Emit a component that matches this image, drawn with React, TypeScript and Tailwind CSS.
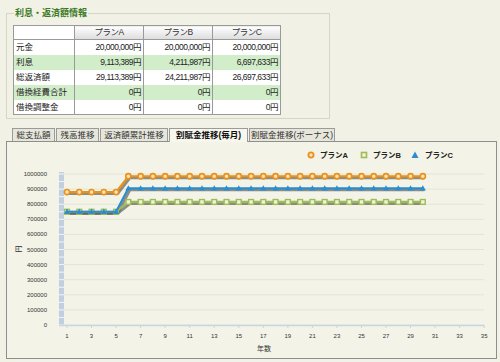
import React from "react";

const rows = [
  { label: "元金", a: "20,000,000円", b: "20,000,000円", c: "20,000,000円", green: false },
  { label: "利息", a: "9,113,389円", b: "4,211,987円", c: "6,697,633円", green: true },
  { label: "総返済額", a: "29,113,389円", b: "24,211,987円", c: "26,697,633円", green: false },
  { label: "借換経費合計", a: "0円", b: "0円", c: "0円", green: true },
  { label: "借換調整金", a: "0円", b: "0円", c: "0円", green: false },
];

const tabs = [
  { label: "総支払額", w: "w-[43px]" },
  { label: "残高推移", w: "w-[43px]" },
  { label: "返済額累計推移", w: "w-[68px]" },
  { label: "割賦金推移(毎月)", w: "w-[79px]", active: true },
  { label: "割賦金推移(ボーナス)", w: "w-[86px]" },
];

// chart geometry, in page coordinates
const xOf = (n: number) => 67 + (n - 1) * 12.27;
const yOf = (v: number) => 325 - (v / 100000) * 15.1;

const makeSeries = (low: number, high: number) =>
  Array.from({ length: 30 }, (_, i) => ({ x: xOf(i + 1), y: yOf(i < 5 ? low : high) }));

const seriesA = makeSeries(880000, 985000);
const seriesB = makeSeries(750000, 815000);
const seriesC = makeSeries(750000, 905000);

const pts = (s: { x: number; y: number }[], d = 0) =>
  s.map((p) => `${p.x + d},${p.y + d}`).join(" ");

const ORANGE = "#e8921c";
const GREEN = "#9dbb56";
const BLUE = "#2b8dcf";

function Chart() {
  const xLabels = Array.from({ length: 18 }, (_, i) => 1 + i * 2);
  const yVals = Array.from({ length: 11 }, (_, i) => i * 100000);
  const bandMarks = Array.from({ length: 21 }, (_, i) => 325 - i * 7.55);

  return (
    <svg width="489" height="216" className="block">
      <g transform="translate(-7,-142)" fontFamily="'Liberation Sans','Noto Sans CJK JP',sans-serif">
        {/* legend */}
        <circle cx="311" cy="155" r="2.6" fill="#fbe3b8" stroke={ORANGE} strokeWidth="1.8" />
        <text x="320" y="158" fontSize="7.5" fontWeight="bold" fill="#222">プランA</text>
        <rect x="361.5" y="152.5" width="5" height="5" fill="#eef3dc" stroke={GREEN} strokeWidth="1.6" />
        <text x="373" y="158" fontSize="7.5" fontWeight="bold" fill="#222">プランB</text>
        <polygon points="415,151.5 418.5,158 411.5,158" fill={BLUE} />
        <text x="425" y="158" fontSize="7.5" fontWeight="bold" fill="#222">プランC</text>

        {/* grid */}
        {yVals.map((v) => (
          <line key={v} x1="64" x2="484" y1={yOf(v)} y2={yOf(v)} stroke="#e4e4d6" strokeWidth="1" />
        ))}

        {/* y axis band */}
        <rect x="59" y="172" width="5" height="153" fill="#c0d0e1" />
        {bandMarks.map((y, i) => (
          <line key={i} x1="59" x2="64" y1={y} y2={y} stroke="#ffffff" strokeWidth="0.8" />
        ))}

        {/* x axis */}
        <line x1="59" x2="484" y1="325.5" y2="325.5" stroke="#c8d5e2" strokeWidth="1.5" />
        {xLabels.map((n) => (
          <line key={n} x1={xOf(n)} x2={xOf(n)} y1="325" y2="328" stroke="#c8d5e2" strokeWidth="1" />
        ))}

        {yVals.map((v) => (
          <text key={v} x="47" y={yOf(v) + 2} fontSize="6" textAnchor="end" fill="#333">
            {v}
          </text>
        ))}
        {xLabels.map((n) => (
          <text key={n} x={xOf(n)} y="338" fontSize="6" textAnchor="middle" fill="#333">
            {n}
          </text>
        ))}
        <text x="264" y="351" fontSize="7" textAnchor="middle" fill="#333">年数</text>
        <text x="0" y="0" fontSize="7" fill="#333" transform="translate(21,249) rotate(-90)" textAnchor="middle">円</text>

        {/* shadows */}
        {[seriesB, seriesC, seriesA].map((s, i) => (
          <polyline key={i} points={pts(s, 1.6)} fill="none" stroke="#4a4a40" strokeOpacity="0.6" strokeWidth="2.8" />
        ))}

        {/* plan B */}
        <polyline points={pts(seriesB)} fill="none" stroke={GREEN} strokeWidth="2.2" />
        {seriesB.map((p, i) => (
          <rect key={i} x={p.x - 2.4} y={p.y - 2.4} width="4.8" height="4.8" fill="#eef3dc" stroke={GREEN} strokeWidth="1.4" />
        ))}

        {/* plan C */}
        <polyline points={pts(seriesC)} fill="none" stroke={BLUE} strokeWidth="2.2" />
        {seriesC.map((p, i) => (
          <polygon key={i} points={`${p.x},${p.y - 3.2} ${p.x + 3},${p.y + 2.2} ${p.x - 3},${p.y + 2.2}`} fill={BLUE} />
        ))}

        {/* plan A */}
        <polyline points={pts(seriesA)} fill="none" stroke={ORANGE} strokeWidth="2.2" />
        {seriesA.map((p, i) => (
          <circle key={i} cx={p.x} cy={p.y} r="2.6" fill="#fbe3b8" stroke={ORANGE} strokeWidth="1.6" />
        ))}
      </g>
    </svg>
  );
}

export default function App() {
  return (
    <div className="w-[500px] h-[362px] overflow-hidden bg-[#f1f1e5] pl-[6px] pt-[8px] font-['Liberation_Sans','Noto_Sans_CJK_JP',sans-serif] text-[#222]">
      {/* 利息・返済額情報 */}
      <fieldset className="w-[324px] h-[111px] border border-[#d6d6c6]">
        <legend className="ml-[7px] px-[1px] text-[9px] leading-[10px] font-bold text-[#3c7a25]">
          利息・返済額情報
        </legend>
        <table className="ml-[6px] mt-[7px] border-collapse border border-[#9a9a9a] text-[8.5px] leading-none">
          <thead>
            <tr className="h-[14px]">
              <th className="w-[61px] bg-white border border-[#9a9a9a]"></th>
              {["プランA", "プランB", "プランC"].map((h, i) => (
                <th
                  key={h}
                  className={`${i === 2 ? "w-[68px]" : "w-[69px]"} border border-[#9a9a9a] bg-gradient-to-b from-white to-[#dcdcdc] font-normal tracking-[-0.5px] text-[#333]`}
                >
                  {h}
                </th>
              ))}
            </tr>
          </thead>
          <tbody>
            {rows.map((r) => (
              <tr key={r.label} className={`h-[15px] ${r.green ? "bg-[#d2edca]" : "bg-white"}`}>
                <td className="pl-[2px] text-left">{r.label}</td>
                {[r.a, r.b, r.c].map((v, i) => (
                  <td key={i} className="pr-[2px] text-right tracking-[-0.5px] border-l border-[#9a9a9a]">
                    {v}
                  </td>
                ))}
              </tr>
            ))}
          </tbody>
        </table>
      </fieldset>

      {/* tabs */}
      <div className="flex items-end gap-[1px] ml-[6px] mt-[9px] h-[13px]">
        {tabs.map((t) => (
          <div
            key={t.label}
            className={`${t.w} flex items-center justify-center border border-b-0 border-[#9a9a9a] text-[8.5px] leading-none whitespace-nowrap ${
              t.active
                ? "h-[14px] -mb-[1px] relative z-10 bg-[#f7f7ee] font-bold text-[#111]"
                : "h-[13px] bg-[#e6e6da] text-[#333]"
            }`}
          >
            {t.label}
          </div>
        ))}
      </div>

      {/* chart panel */}
      <div className="w-[491px] h-[218px] border border-[#8e8e8e] bg-[#f3f3e8]">
        <Chart />
      </div>
    </div>
  );
}
